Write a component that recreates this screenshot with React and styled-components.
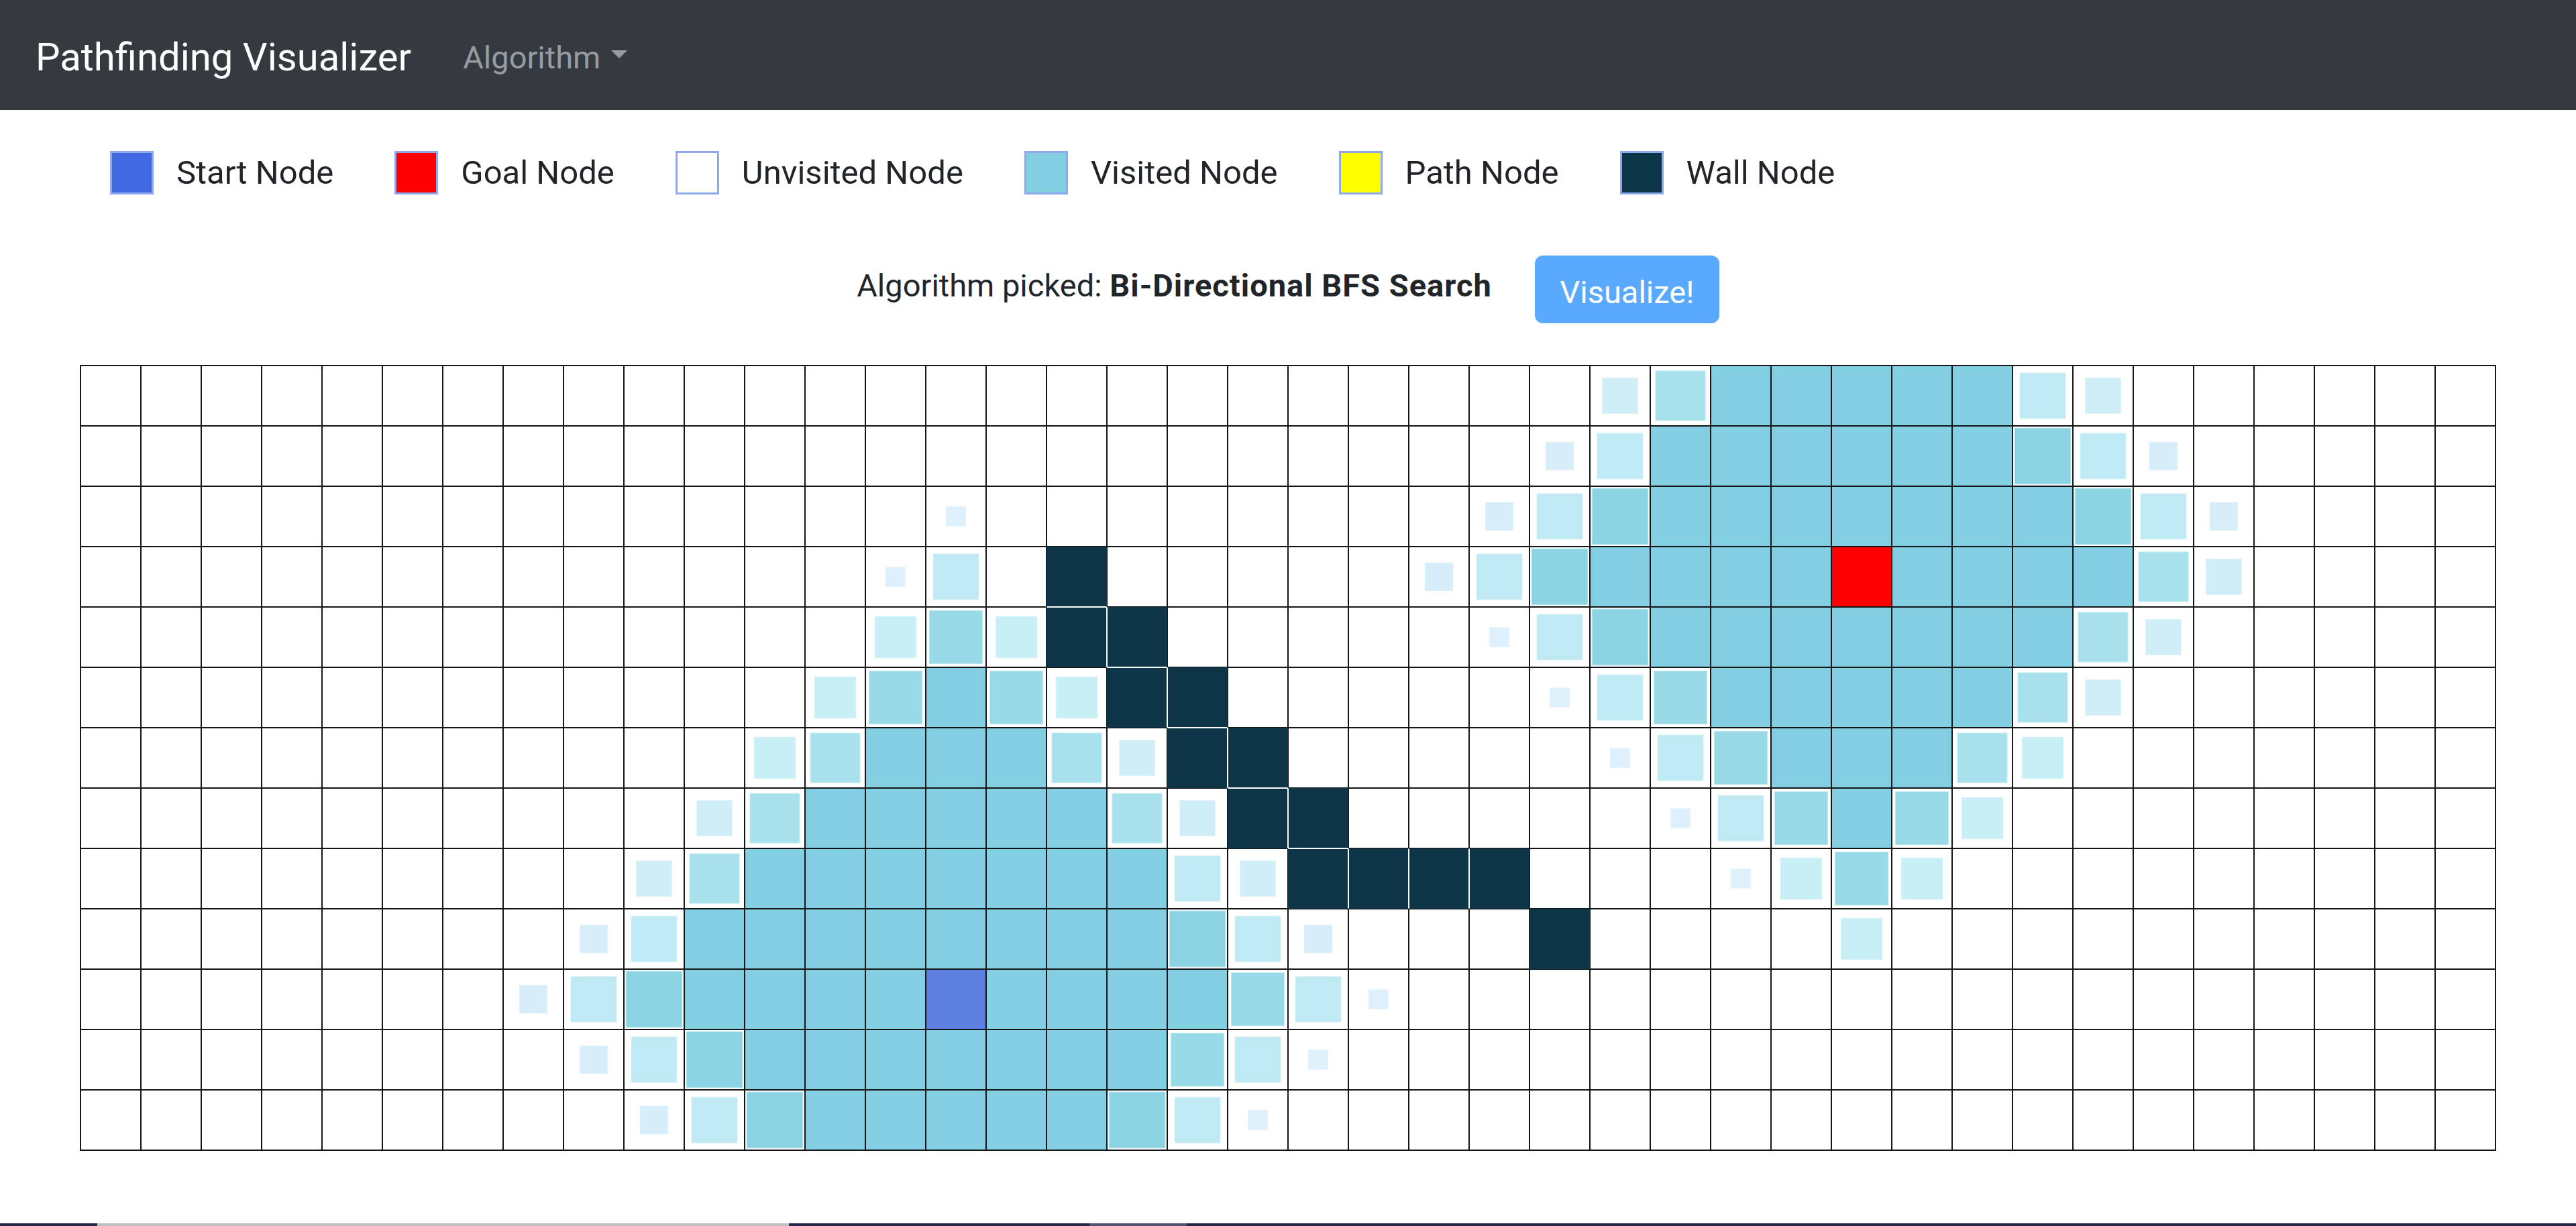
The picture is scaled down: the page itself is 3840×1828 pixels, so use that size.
import React from "react";
import styled, { createGlobalStyle, css } from "styled-components";

const GlobalStyle = createGlobalStyle`
  html, body {
    margin: 0;
    padding: 0;
    background: #ffffff;
  }
  body {
    font-family: Roboto, "Liberation Sans", Arial, sans-serif;
    color: #212529;
    overflow: hidden;
  }
`;

// animation stages of a visited node, captured mid-run
const LEVELS = {
  1: { scale: 0.34, color: "#dff0fd" },
  2: { scale: 0.48, color: "#d7eefa" },
  3: { scale: 0.61, color: "#cfeef8" },
  4: { scale: 0.71, color: "#c8eef6" },
  5: { scale: 0.78, color: "#bfeaf4" },
  6: { scale: 0.85, color: "#a8e0ec" },
  7: { scale: 0.91, color: "#99dae7" },
  8: { scale: 0.96, color: "#8bd4e3" },
};

const COLS = 40;

// sparse description of each row: "col:state" or "from-to:state"
const ROW_SPECS = [
  "25:3 26:6 27-31:9 32:5 33:3",
  "24:2 25:5 26-31:9 32:8 33:5 34:2",
  "14:1 23:2 24:5 25:8 26-32:9 33:8 34:5 35:2",
  "13:1 14:5 16:W 22:2 23:5 24:8 25-28:9 29:G 30-33:9 34:6 35:3",
  "13:4 14:7 15:4 16-17:W 23:1 24:5 25:8 26-32:9 33:6 34:3",
  "12:4 13:7 14:9 15:7 16:4 17-18:W 24:1 25:5 26:7 27-31:9 32:6 33:3",
  "11:4 12:6 13-15:9 16:6 17:3 18-19:W 25:1 26:5 27:7 28-30:9 31:6 32:4",
  "10:3 11:6 12-16:9 17:6 18:3 19-20:W 26:1 27:5 28:7 29:9 30:7 31:4",
  "9:3 10:6 11-17:9 18:5 19:3 20-23:W 27:1 28:4 29:7 30:4",
  "8:2 9:5 10-17:9 18:8 19:5 20:2 24:W 29:4",
  "7:2 8:5 9:8 10-13:9 14:S 15-18:9 19:7 20:5 21:1",
  "8:2 9:5 10:8 11-17:9 18:7 19:5 20:1",
  "9:2 10:5 11:8 12-16:9 17:8 18:5 19:1",
];

const buildGrid = () =>
  ROW_SPECS.map((spec) => {
    const row = Array(COLS).fill(".");
    spec.split(" ").forEach((part) => {
      const [range, state] = part.split(":");
      const [from, to] = range.split("-").map(Number);
      for (let c = from; c <= (to ?? from); c++) row[c] = state;
    });
    return row;
  });

const GRID = buildGrid();

const LEGEND = [
  { label: "Start Node", color: "#4169e1" },
  { label: "Goal Node", color: "#ff0000" },
  { label: "Unvisited Node", color: "#ffffff" },
  { label: "Visited Node", color: "#83cfe1" },
  { label: "Path Node", color: "#ffff00" },
  { label: "Wall Node", color: "#0c3547" },
];

const WALL = "#0d3547";
const LINE = "#121416";

const Navbar = styled.nav`
  height: 164px;
  box-sizing: border-box;
  background: #343a40;
  display: flex;
  align-items: center;
  padding: 6px 0 0 53px;
`;

const Brand = styled.span`
  font-size: 58px;
  color: #ffffff;
  margin-right: 77px;
`;

const NavToggle = styled.span`
  display: flex;
  align-items: center;
  font-size: 47px;
  color: rgba(255, 255, 255, 0.5);
`;

const Caret = styled.span`
  width: 0;
  height: 0;
  margin: 0 0 8px 16px;
  border-top: 12px solid rgba(255, 255, 255, 0.5);
  border-left: 12px solid transparent;
  border-right: 12px solid transparent;
`;

const Legend = styled.ul`
  list-style: none;
  margin: 61px 0 0;
  padding: 0 0 0 164px;
  display: flex;
  align-items: center;
  gap: 91px;
`;

const LegendItem = styled.li`
  display: flex;
  align-items: center;
  gap: 34px;
  font-size: 49px;
  color: #212529;
`;

const Swatch = styled.span`
  width: 65px;
  height: 65px;
  box-sizing: border-box;
  border: 3px solid #8fa8ef;
  background: ${({ $color }) => $color};
`;

const PickedRow = styled.div`
  display: flex;
  justify-content: center;
  align-items: center;
  gap: 64px;
  margin-top: 91px;
  font-size: 47px;
`;

const PickedLabel = styled.p`
  margin: 0 0 12px;
  color: #212529;

  b {
    letter-spacing: 1px;
  }
`;

const VisualizeButton = styled.button`
  width: 275px;
  height: 101px;
  padding: 8px 0 0;
  border: none;
  border-radius: 12px;
  background: #59a9ff;
  color: #ffffff;
  font-family: inherit;
  font-size: 47px;
`;

const Board = styled.div`
  display: grid;
  grid-template-columns: repeat(${COLS}, 90px);
  grid-auto-rows: 90px;
  width: max-content;
  margin: 62px auto 0;
  border: 1px solid ${LINE};
`;

const kindBackground = {
  ".": "#ffffff",
  9: "#83cfe1",
  S: "#5d7fe0",
  G: "#ff0000",
  W: WALL,
};

const Cell = styled.div`
  position: relative;
  box-sizing: border-box;
  border: 1px solid ${LINE};
  background: ${({ $kind }) => kindBackground[$kind] ?? "#ffffff"};
  ${({ $kind, $sides }) =>
    $kind === "W" &&
    css`
      border-top-color: ${$sides.top ? "#ffffff" : WALL};
      border-right-color: ${$sides.right ? "#ffffff" : WALL};
      border-bottom-color: ${$sides.bottom ? "#ffffff" : WALL};
      border-left-color: ${$sides.left ? "#ffffff" : WALL};
    `}
`;

const Fill = styled.div`
  position: absolute;
  inset: 0;
  background: ${({ $level }) => LEVELS[$level].color};
  transform: scale(${({ $level }) => LEVELS[$level].scale});
  box-shadow: inset 0 0 0 1px rgba(255, 255, 255, 0.45);
`;

const BottomStrip = styled.div`
  position: fixed;
  left: 0;
  right: 0;
  bottom: 0;
  height: 4px;
  display: flex;
  background: #29244a;
`;

const StripSegment = styled.div`
  width: ${({ $w }) => $w}px;
  background: ${({ $c }) => $c};
`;

const isWall = (r, c) => GRID[r] && GRID[r][c] === "W";

export default function App() {
  return (
    <>
      <GlobalStyle />
      <Navbar>
        <Brand>Pathfinding Visualizer</Brand>
        <NavToggle>
          Algorithm
          <Caret />
        </NavToggle>
      </Navbar>

      <Legend>
        {LEGEND.map((item) => (
          <LegendItem key={item.label}>
            <Swatch $color={item.color} />
            {item.label}
          </LegendItem>
        ))}
      </Legend>

      <PickedRow>
        <PickedLabel>
          Algorithm picked: <b>Bi-Directional BFS Search</b>
        </PickedLabel>
        <VisualizeButton>Visualize!</VisualizeButton>
      </PickedRow>

      <Board>
        {GRID.map((row, r) =>
          row.map((state, c) => {
            const partial = LEVELS[state] !== undefined;
            const sides =
              state === "W"
                ? {
                    top: isWall(r - 1, c),
                    right: isWall(r, c + 1),
                    bottom: isWall(r + 1, c),
                    left: isWall(r, c - 1),
                  }
                : null;
            return (
              <Cell key={`${r}-${c}`} $kind={partial ? "." : state} $sides={sides}>
                {partial && <Fill $level={state} />}
              </Cell>
            );
          })
        )}
      </Board>

      <BottomStrip>
        <StripSegment $w={145} $c="#29244a" />
        <StripSegment $w={1031} $c="#c0c0c0" />
        <StripSegment $w={448} $c="#29244a" />
        <StripSegment $w={145} $c="#545070" />
      </BottomStrip>
    </>
  );
}
